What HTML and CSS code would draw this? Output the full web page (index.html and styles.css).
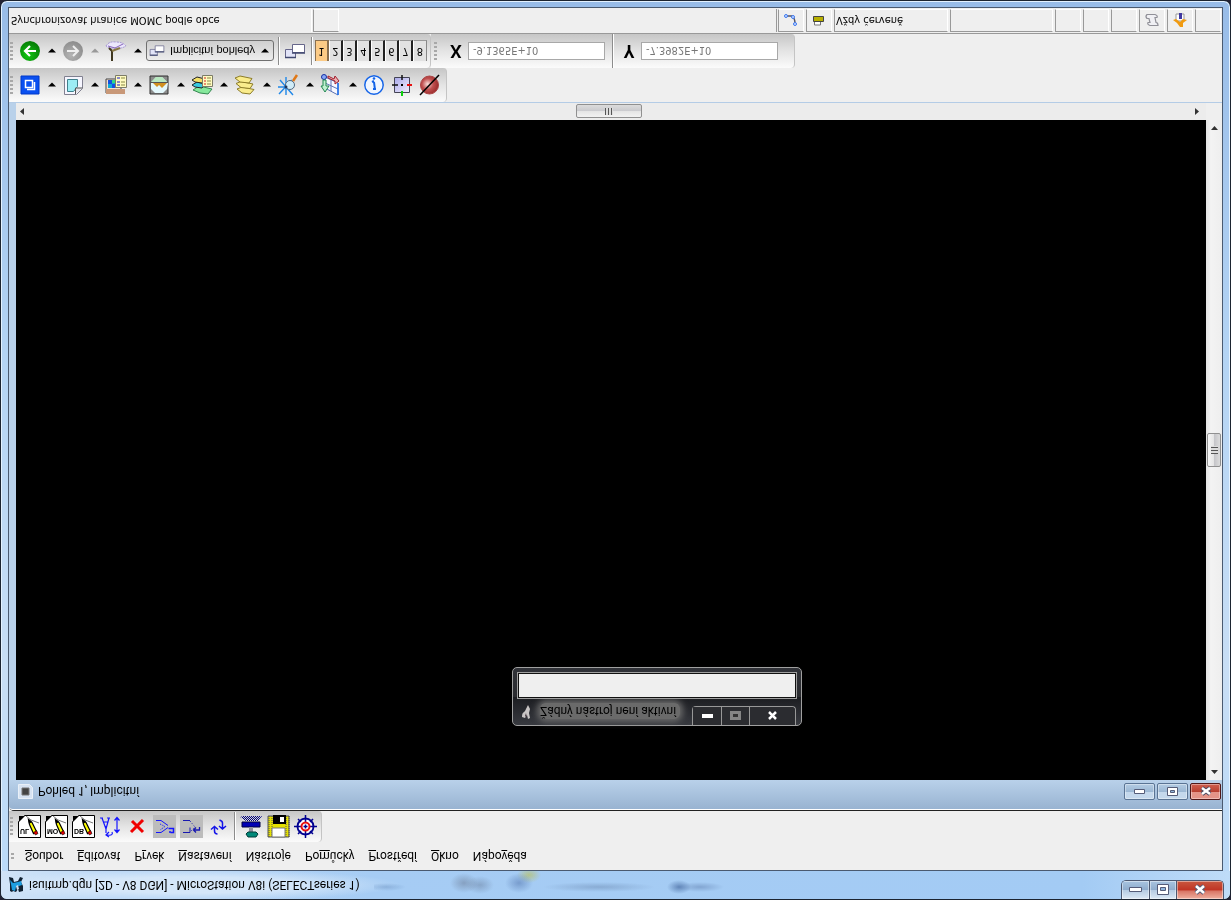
FILE: index.html
```
<!DOCTYPE html>
<html lang="cs">
<head>
<meta charset="utf-8">
<title>isuitmp.dgn [2D - V8 DGN] - MicroStation V8i (SELECTseries 1)</title>
<link rel="stylesheet" href="styles.css">
</head>
<body>
<svg class="defs" aria-hidden="true">
  <defs>
    <radialGradient id="gGreen" cx="40%" cy="70%" r="65%"><stop offset="0" stop-color="#10c810"/><stop offset="1" stop-color="#068006"/></radialGradient>
    <radialGradient id="gGray" cx="40%" cy="70%" r="65%"><stop offset="0" stop-color="#b4b4b4"/><stop offset="1" stop-color="#8f8f8f"/></radialGradient>
    <radialGradient id="gRed" cx="40%" cy="45%" r="62%"><stop offset="0" stop-color="#fbe0dc"/><stop offset=".5" stop-color="#c05050"/><stop offset="1" stop-color="#982828"/></radialGradient>
    <linearGradient id="gLav" x2="1" y2="1"><stop offset="0" stop-color="#a8a8ea"/><stop offset="1" stop-color="#f4f0ff"/></linearGradient>
    <pattern id="pDots" width="2" height="2" patternUnits="userSpaceOnUse"><rect width="1" height="1" fill="#00007c"/><rect x="1" y="1" width="1" height="1" fill="#00007c"/></pattern>
    <symbol id="tri" viewBox="0 0 8 5"><path d="M0 4.500 4 .5 8 4.500z" fill="currentColor"/></symbol>
    <symbol id="pencil" viewBox="0 0 23 23">
      <path d="M.5 22.500V6.500L6.500.5h16v22z" fill="#fff" stroke="#000"/>
      <path d="M1 7V1h6z" fill="#000"/>
      <path d="M8 1l5 4 8 3" fill="none" stroke="#777"/>
      <path d="M10.500 4.500l3.500 3 4.500 9-3 2-4-9z" fill="#ff0" stroke="#000" stroke-width="1.200"/>
      <path d="M10 4l1 5 3-2z" fill="#000"/><path d="M15.500 17.500l3-2 1.500 3-2.500 1.500z" fill="#d00" stroke="#000" stroke-width=".6"/>
    </symbol>
    <symbol id="windows" viewBox="0 0 22 18">
      <path d="M1.500 7.500h10v8h-10z" fill="#e2e4f8" stroke="#66668a"/><path d="M1 15.500h11" stroke="#404870" stroke-width="1.500"/>
      <path d="M8.500 2.500h12v8h-12z" fill="#fff" stroke="#66668a"/><path d="M8 11h13" stroke="#404870" stroke-width="1.500"/>
    </symbol>
  </defs>
</svg>

<main class="app">
  <header class="titlebar">
    <svg class="icon logo" viewBox="0 0 15 15"><path d="M0 0l4 1 1 4 4-1 2-4 3 1-2 4 2 4v5l-4 1-1-3-2 3-3-1-1 1-2-1V7z" fill="#123"/><path d="M1 3l3 3 5-1 3-1 1 4-3 1-3 1-1 4-3-1-1-6z" fill="#1e9ee0"/><path d="M7 9l2-1 1 4-2 1z" fill="#cde"/></svg>
    <h1 class="title">isuitmp.dgn [2D - V8 DGN] - MicroStation V8i (SELECTseries 1)</h1>
    <div class="ghosts"></div>
    <div class="caption">
      <button class="cap cap-min" aria-label="Minimalizovat"><svg class="icon" width="13" height="5"><path d="M.5.5h12v4H.5z" fill="#fff" stroke="#555c78"/></svg></button>
      <button class="cap cap-max" aria-label="Maximalizovat"><svg class="icon" width="12" height="11"><path d="M.5.5h11v10H.5z" fill="#fff" stroke="#555c78"/><path d="M3.500 3.500h5v3h-5z" fill="#8fb4da" stroke="#555c78"/></svg></button>
      <button class="cap cap-close" aria-label="Zavřít"><svg class="icon" width="12" height="11"><path d="M2 2l8 7M10 2L2 9" stroke="#555c78" stroke-width="4.500"/><path d="M2 2l8 7M10 2L2 9" stroke="#fff" stroke-width="2.600"/></svg></button>
    </div>
  </header>

  <div class="client">
    <nav class="menu">
      <span class="grip grip-short"></span>
      <a href="#"><u>S</u>oubor</a><a href="#"><u>E</u>ditovat</a><a href="#">P<u>r</u>vek</a><a href="#"><u>N</u>astavení</a><a href="#">Nástro<u>j</u>e</a><a href="#">Po<u>m</u>ůcky</a><a href="#"><u>P</u>rostředí</a><a href="#"><u>O</u>kno</a><a href="#">Nápo<u>v</u>ěda</a>
    </nav>

    <div class="dock dock-top">
      <div class="bar bar-main">
        <span class="grip"></span>
        <div class="tools">
          <button class="tool lettered" aria-label="UL"><svg class="icon" width="23" height="23"><use href="#pencil"/></svg><span class="tag">UL</span></button>
          <button class="tool lettered" aria-label="MO"><svg class="icon" width="23" height="23"><use href="#pencil"/></svg><span class="tag">MO</span></button>
          <button class="tool lettered" aria-label="DB"><svg class="icon" width="23" height="23"><use href="#pencil"/></svg><span class="tag">DB</span></button>
          <button class="tool" aria-label="Text"><svg class="icon" width="23" height="23" fill="none" stroke="#1414ff" stroke-width="1.200"><path d="M1 3h3M8 3h3M3 3l4 11L10 3M4 7h5M7 14v4M18 3v14M15.500 5.500L18 2.500l2.500 3M15.500 14.500l2.500 3 2.500-3M8 20c5 1 6-1 5-3M10 17l-3 3 3 2"/></svg></button>
          <button class="tool" aria-label="Smazat"><svg class="icon" width="23" height="23"><path d="M6 6l11 11M17 5L5 17" stroke="#f00000" stroke-width="3"/></svg></button>
          <button class="tool off" aria-label="Spojit"><svg class="icon" width="23" height="23" fill="none" stroke="#1414ff"><path d="M3 5.500h5l7 5M3 17.500h5l7-5"/><path d="M7 9l5 2.500L7 15" stroke-dasharray="1 1"/><path d="M15.500 13.500h5v4h-3M16 17h2" stroke-width="1.500"/></svg></button>
          <button class="tool off" aria-label="Rozdělit"><svg class="icon" width="23" height="23" fill="none" stroke="#1818b0"><path d="M3 5.500h7M3 17.500h7v-5"/><path d="M10 6l5 6-5 5" stroke-dasharray="1 2"/><path d="M19.500 12v3h-6M16 12.500l-2.500 2.500 2.500 2.500" stroke-width="1.300"/></svg></button>
          <button class="tool" aria-label="Obnovit"><svg class="icon" width="23" height="23" fill="none" stroke="#1414e8" stroke-width="1.500"><path d="M7.500 11v5q0 3 3 3M4 14.500l3.500-3 3.500 3M15.500 14V8q0-2-3-3M12 11l3.500 3 3.500-3"/></svg></button>
          <span class="sep sep-tall"></span>
          <button class="tool" aria-label="Reference"><svg class="icon" width="23" height="23"><path d="M0 2l3-1h19l-4 5H6z" fill="url(#pDots)"/><path d="M2 7h18v5H2z" fill="#0000b4" stroke="#000040"/><path d="M9 12h4v6H9z" fill="#9090a0"/><path d="M8 17h8l2 2-2 3H8l-2-3z" fill="#008878" stroke="#003c38"/></svg></button>
          <button class="tool" aria-label="Uložit"><svg class="icon" width="23" height="23"><path d="M1 1h21v21H1z" fill="#e4e000" stroke="#555"/><path d="M2 1v21M5 1v21M19 1v21M22 1v21" stroke="#555" stroke-dasharray="1 1"/><path d="M6 0h13v9H6z" fill="#000"/><path d="M13 2h4v5h-4z" fill="#fff"/><path d="M5 13h13v9H5z" fill="#fff" stroke="#777"/></svg></button>
          <button class="tool" aria-label="Cíl"><svg class="icon" width="23" height="23" fill="none"><circle cx="11.500" cy="11.500" r="8" fill="#fff" stroke="#000090" stroke-width="2"/><path d="M11.500 0v23M0 11.500h23M4 4l3 3M19 4l-3 3M4 19l3-3M19 19l-3-3" stroke="#000090" stroke-width="1.500"/><circle cx="11.500" cy="11.500" r="4" fill="#fff" stroke="#e81010" stroke-width="2"/><path d="M11.500 9.500v4M9.500 11.500h4" stroke="#000090" stroke-width="1.500"/></svg></button>
        </div>
      </div>
    </div>

    <section class="view">
      <header class="view-title">
        <svg class="icon view-icon" viewBox="0 0 15 15"><path d="M.5.500h11l3 3v11h-14z" fill="#d7e3f2" stroke="#e9f0f8"/><path d="M4 4h7v7H4z" fill="#444" stroke="#777"/></svg>
        <h2 class="view-name">Pohled 1, Implicitní</h2>
        <div class="view-caption">
          <button class="vcap" aria-label="Minimalizovat pohled"><svg class="icon" width="12" height="5"><path d="M.5.500h10v4H.5z" fill="#fff" stroke="#555c78"/></svg></button>
          <button class="vcap" aria-label="Maximalizovat pohled"><svg class="icon" width="11" height="9"><path d="M.5.500h10v8H.5z" fill="#fff" stroke="#555c78"/><path d="M3.500 3.500h4v2h-4z" fill="#8fb4da" stroke="#555c78"/></svg></button>
          <button class="vcap vcap-close" aria-label="Zavřít pohled"><svg class="icon" width="12" height="10"><path d="M2 2l8 6M10 2L2 8" stroke="#4b4a60" stroke-width="4.500"/><path d="M2 2l8 6M10 2L2 8" stroke="#fff" stroke-width="2.500"/></svg></button>
        </div>
      </header>
      <div class="view-body">
        <div class="canvas">
          <section class="palette">
            <header class="palette-title">
              <svg class="icon palette-icon" viewBox="0 0 12 16"><path d="M8 1l2 4-1 4 1 5-2 1-1-4-2 3-3-1c0-4 1-4 3-6z" fill="#c8c4c4"/><path d="M6 9l1 5-2-2z" fill="#40343c"/></svg>
              <h3 class="palette-name">Žádný nástroj není aktivní</h3>
              <div class="palette-caption">
                <button class="pcap" aria-label="Minimalizovat paletu"><svg class="icon" width="11" height="4"><path d="M0 0h11v4H0z" fill="#fff"/></svg></button>
                <button class="pcap" aria-label="Maximalizovat paletu"><svg class="icon" width="11" height="9"><path d="M1.500 1.500h8v6h-8z" fill="#333" stroke="#858585" stroke-width="3"/></svg></button>
                <button class="pcap pcap-close" aria-label="Zavřít paletu"><svg class="icon" width="11" height="9"><path d="M2 1l7 7M9 1L2 8" stroke="#fff" stroke-width="2.500"/></svg></button>
              </div>
            </header>
            <div class="palette-body"></div>
          </section>
        </div>
        <div class="scroll-v">
          <span class="arrow"><svg class="icon" width="7" height="4"><path d="M0 0h7L3.500 4z" fill="#333"/></svg></span>
          <span class="thumb-v"></span>
          <span class="arrow"><svg class="icon" width="7" height="4"><path d="M0 4h7L3.500 0z" fill="#333"/></svg></span>
        </div>
        <div class="scroll-h">
          <span class="arrow-h"><svg class="icon" width="4" height="7"><path d="M4 0v7L0 3.500z" fill="#333"/></svg></span>
          <span class="thumb-h"></span>
          <span class="arrow-h"><svg class="icon" width="4" height="7"><path d="M0 0v7l4-3.500z" fill="#333"/></svg></span>
        </div>
        <div class="corner"></div>
      </div>
    </section>

    <div class="dock">
      <div class="bar bar-view">
        <span class="grip"></span>
        <button class="split" aria-label="Atributy pohledu"><svg class="icon" width="22" height="22"><path d="M2 2h18v18H2z" fill="#0a50f0" stroke="#0038c8"/><path d="M6.500 6.500h7v7h-7zM8 15.500h7.500V8" fill="none" stroke="#fff" stroke-width="1.500"/></svg><svg class="icon tri"><use href="#tri"/></svg></button>
        <button class="split" aria-label="Modely"><svg class="icon" width="22" height="22"><path d="M2.500 2.500h18v12l-6 6h-12z" fill="#f6f6ff" stroke="#808090"/><path d="M5.500 5.500h10v7l-4 5h-6z" fill="#9cecf4" stroke="#40808c"/><path d="M13.500 20v-6h7" fill="#e4e4e8" stroke="#555"/></svg><svg class="icon tri"><use href="#tri"/></svg></button>
        <button class="split" aria-label="Rastr"><svg class="icon" width="22" height="22"><path d="M1 5h15v14H1z" fill="#f4e0d0" stroke="#444"/><path d="M3 6h8v8H3z" fill="#0ca8d8"/><path d="M3 6h4v4H3zM7 10h4v4H7z" fill="#1450e0"/><path d="M7 6h3v3H7z" fill="#30d888"/><path d="M1 15h19v5H1z" fill="#c89878"/><path d="M10.500 1.500h11v12h-11z" fill="#fffbc0" stroke="#7c7c68"/><path d="M12 4h3M12 8h3M12 11h3" stroke="#1414d0"/><path d="M16 4h4M16 8h4M16 11h4" stroke="#884"/></svg><svg class="icon tri"><use href="#tri"/></svg></button>
        <button class="split" aria-label="Mračna bodů"><svg class="icon" width="22" height="22"><path d="M2 2h18v18H2z" fill="#8c8c8c" stroke="#333"/><path d="M3 9l5-6h6l6 6-1 6-4 4H7l-4-4z" fill="#e4f8fc"/><path d="M3 8l5-5h6l5 5z" fill="#b8e8c0"/><path d="M5 9h14l-5 5-3-3-2 2z" fill="#d09020"/><path d="M2 8.500h18" stroke="#555"/></svg><svg class="icon tri"><use href="#tri"/></svg></button>
        <button class="split" aria-label="Správce vrstev"><svg class="icon" width="22" height="22"><path d="M2 16l6-4 13 3-4 5-8-1z" fill="#86e89c" stroke="#348850"/><path d="M1 11l5-3 8 2-3 4-7-1z" fill="#38c8e0" stroke="#222"/><path d="M1 6l5-3 8 2-3 4-7-1z" fill="#f4e068" stroke="#222"/><path d="M11.500 1.500h10v11h-10z" fill="#fffbc0" stroke="#7c7c68"/><path d="M13 4h2M13 7h2M13 10h2" stroke="#d02020"/><path d="M16 4h4M16 7h4M16 10h4" stroke="#884"/></svg><svg class="icon tri"><use href="#tri"/></svg></button>
        <button class="split" aria-label="Zobrazení vrstev"><svg class="icon" width="22" height="22" fill="#faec8c" stroke="#8c7c28"><path d="M3 15l5-2 12 2.500-4 4.500-8-1z"/><path d="M2 9.500l5-2 12 2.500-3 4.500-9-1z"/><path d="M1 4l5-2 12 2.500-3 4.500-9-1z"/></svg><svg class="icon tri"><use href="#tri"/></svg></button>
        <button class="split" aria-label="Přesné kreslení"><svg class="icon" width="22" height="22" fill="none"><path d="M9 3v18M1 13h16M3 6l13 15M15 6L2 20" stroke="#2088e8" stroke-width="1.400"/><circle cx="13" cy="11" r="4.500" fill="#d0ecf8" stroke="#506880"/><path d="M16 7l4-6" stroke="#e07818" stroke-width="2.500"/><circle cx="9" cy="13" r="1.500" fill="#203860"/></svg><svg class="icon tri"><use href="#tri"/></svg></button>
        <button class="split" aria-label="ACS"><svg class="icon" width="22" height="22"><path d="M5 3l13 6v12L5 14zM11 6v11M5 9l13 6" fill="#f8f8ff" stroke="#5c74b4"/><path d="M18 9v12" stroke="#1c70f0" stroke-width="1.500"/><circle cx="4" cy="3" r="2.500" fill="#88a8f8" stroke="#1830a0"/><path d="M8 2l6 3 1-3 4 5-4 3v-3l-7-3z" fill="#f0b0b0" stroke="#a02030"/><path d="M3 6h3v6h3l-4 6-4-6h2z" fill="#c0f0d0" stroke="#208850"/></svg><svg class="icon tri"><use href="#tri"/></svg></button>
        <div class="singles">
          <button class="single" aria-label="Informace"><svg class="icon" width="22" height="22"><circle cx="11" cy="11" r="9.200" fill="#f0f6ff" stroke="#1464e8" stroke-width="1.500"/><path d="M12 16l-1-8M9 8l2-1M10 15h3" stroke="#1464e8" stroke-width="2"/><circle cx="11" cy="4.500" r="1.300" fill="#1464e8"/></svg></button>
          <button class="single" aria-label="Nitkový kříž"><svg class="icon" width="22" height="22"><path d="M3.500 3.500h15v15h-15z" fill="url(#gLav)" stroke="#445"/><path d="M1 11h6M11 1v5" stroke="#111" stroke-width="1.500"/><path d="M16 11h5" stroke="#e81010" stroke-width="2"/><path d="M11 17v5" stroke="#10d010" stroke-width="2"/><path d="M10 11h2" stroke="#000" stroke-width="2"/></svg></button>
          <button class="single" aria-label="Vypnout vykreslení"><svg class="icon" width="22" height="22"><circle cx="10.500" cy="11" r="9" fill="url(#gRed)" stroke="#a44"/><path d="M1 21L20 1" stroke="#000" stroke-width="1.500"/></svg></button>
        </div>
      </div>
    </div>

    <div class="dock">
      <div class="bar bar-nav">
        <span class="grip"></span>
        <button class="split" aria-label="Zpět"><svg class="icon" width="22" height="22"><circle cx="11" cy="11" r="10" fill="url(#gGreen)"/><path d="M17 11H7M11 6l-5 5 5 5" fill="none" stroke="#fff" stroke-width="2.200"/></svg><svg class="icon tri"><use href="#tri"/></svg></button>
        <button class="split dim" aria-label="Vpřed"><svg class="icon" width="22" height="22"><circle cx="11" cy="11" r="10" fill="url(#gGray)"/><path d="M5 11h10M11 6l5 5-5 5" fill="none" stroke="#eee" stroke-width="2"/></svg><svg class="icon tri"><use href="#tri"/></svg></button>
        <button class="split" aria-label="Kompas"><svg class="icon" width="22" height="22"><path d="M1 6q3-5 10-4 7 0 10 4-5 3-10 2-7 1-10-2z" fill="#ece8fc" stroke="#a090d0" stroke-dasharray="2 1"/><path d="M3 6l7 2 8-4" fill="none" stroke="#86b"/><path d="M4 8l3 3v10" fill="none" stroke="#403820" stroke-width="2"/><path d="M7 11l8-3" stroke="#887848" stroke-width="2"/></svg><svg class="icon tri"><use href="#tri"/></svg></button>
        <div class="combo">
          <svg class="icon" width="16" height="13"><use href="#windows"/></svg>
          <select class="combo-select" aria-label="Skupina pohledů"><option>Implicitní pohledy</option></select>
          <svg class="icon tri"><use href="#tri"/></svg>
        </div>
        <span class="sep"></span>
        <button class="single" aria-label="Pohledy"><svg class="icon" width="22" height="18"><use href="#windows"/></svg></button>
        <span class="sep"></span>
        <div class="toggles">
          <button class="toggle on">1</button><button class="toggle">2</button><button class="toggle">3</button><button class="toggle">4</button><button class="toggle">5</button><button class="toggle">6</button><button class="toggle">7</button><button class="toggle">8</button>
        </div>
      </div>
      <div class="bar bar-coords">
        <span class="grip"></span>
        <label class="axis" for="cx">X</label><input class="coord" id="cx" value="-9.1365E+10">
        <span class="sep sep-full"></span>
        <label class="axis" for="cy">Y</label><input class="coord" id="cy" value="-7.3982E+10">
      </div>
    </div>

    <footer class="status">
      <span class="message">Synchronizovat hranice MOMC podle obce</span>
      <span class="cell"></span>
      <span class="status-gap"></span>
      <span class="cell"><svg class="icon" width="16" height="16"><path d="M2 4h7q3 2 3 8" fill="none" stroke="#556" stroke-width="1.500"/><circle cx="3" cy="4" r="1.500" fill="#cfe0ff" stroke="#3c78f0"/><circle cx="10" cy="5" r="1.500" fill="#cfe0ff" stroke="#3c78f0"/><circle cx="12" cy="12" r="1.500" fill="#cfe0ff" stroke="#3c78f0"/></svg></span>
      <span class="cell"><svg class="icon" width="16" height="16"><path d="M3.500 9v4h6V9" fill="#fff" stroke="#777"/><path d="M2.500 4.500h10v5h-10z" fill="#b8b000" stroke="#444"/></svg></span>
      <span class="cell cell-text">Vždy červeně</span>
      <span class="cell cell-mid"></span>
      <span class="cell"></span><span class="cell"></span><span class="cell"></span>
      <span class="cell"><svg class="icon" width="16" height="16"><path d="M3 2.500h8q3 1 2 3h-2l1 5q2 0 2 3H6q-3-1-2-3h2l-1-4H3q-2-2 0-4z" fill="#f0f0f4" stroke="#909098" stroke-width="1.200"/></svg></span>
      <span class="cell"><svg class="icon" width="16" height="16"><path d="M4 2h8v7H4z" fill="#fff" stroke="#999"/><path d="M7 1h3v6H7z" fill="#4038a0"/><path d="M1 8l3-1 4 3 3-3 4 1-4 3v4H8l-3-4z" fill="#f09a10"/></svg></span>
      <span class="cell"></span>
    </footer>
  </div>
</main>
</body>
</html>
```
FILE: styles.css
```
* { box-sizing: border-box; }
html, body { height: 100%; margin: 0; background: #223; }
h1, h2, h3 { margin: 0; font-weight: normal; }
button { padding: 0; border: 0; background: none; font: inherit; color: inherit; }
.defs { position: absolute; width: 0; height: 0; }

/* The whole desktop is shown upside down. */
.app {
  display: flex;
  flex-direction: column;
  height: 100vh;
  padding: 0 7px 6px 7px;
  border: 1px solid #1c2430;
  border-radius: 7px;
  background: linear-gradient(#b9d9f8 0, #c8def5 25%, #b4d4f4 60%, #98bce8 100%);
  box-shadow: inset 0 0 0 1px #e4f2ff;
  transform: scaleY(-1);
  overflow: hidden;
  font: 11px/14px "DejaVu Sans Condensed", "DejaVu Sans", sans-serif;
  color: #000;
}
/* Icon artwork is upright on screen. */
.icon { display: block; flex: none; transform: scaleY(-1); }

.titlebar {
  display: flex;
  flex: none;
  height: 28px;
  margin: 0 -7px;
  padding: 0 6px 0 8px;
  border-radius: 6px 6px 0 0;
  background:
    radial-gradient(ellipse 210px 16px at 190px 50%, #dcebfad0 50%, #dcebfa00 100%),
    linear-gradient(90deg, #d0e3f7 0, #b8d6f6 10%, #a6ccf4 30%, #a3cbf4 88%, #bfdcf8 100%);
}
.logo { width: 15px; height: 15px; margin-top: 7px; }
.title { margin: 6px 0 0 5px; font: 12px/16px Roboto, sans-serif; white-space: nowrap; }
.ghosts {
  flex: 1;
  margin-left: 14px;
  background:
    radial-gradient(ellipse 20px 4px at 12px 12px, #6d94c480, transparent),
    radial-gradient(ellipse 14px 10px at 90px 16px, #6d7f9a90, transparent),
    radial-gradient(ellipse 14px 9px at 106px 14px, #7088a890, transparent),
    radial-gradient(ellipse 14px 10px at 145px 16px, #5578b090, transparent),
    radial-gradient(ellipse 12px 8px at 155px 24px, #b8c060b0, transparent),
    radial-gradient(ellipse 56px 5px at 225px 12px, #6d8cb480, transparent),
    radial-gradient(ellipse 12px 7px at 305px 12px, #3c6098a0, transparent),
    radial-gradient(ellipse 24px 5px at 326px 12px, #6080b080, transparent);
}
.caption { display: flex; height: 19px; border: 1px solid #4c5870; border-top: 0; border-radius: 0 0 5px 5px; overflow: hidden; }
.cap { display: grid; place-items: center; width: 27px; background: linear-gradient(#dce9f5 0, #b4cae2 50%, #8faccc 50%, #a8c4e0 100%); box-shadow: inset 0 0 0 1px #ffffff70; }
.cap + .cap { border-left: 1px solid #4c5870; }
.cap-close { width: 47px; background: linear-gradient(#f0b0a0 0, #d87464 45%, #c03424 50%, #c85840 100%); }

.client {
  display: flex;
  flex: 1;
  flex-direction: column;
  min-height: 0;
  border: 1px solid #4a5a70;
  background: #efefef;
}
.menu { display: flex; align-items: center; flex: none; gap: 15px; height: 28px; padding-left: 2px; font: 12px/16px Roboto, sans-serif; }
.menu a { color: #000; text-decoration: none; }
.menu a + a { margin-left: -1px; }
.grip { flex: none; width: 3px; height: 18px; background: repeating-linear-gradient(#a8a8a8 0 2px, transparent 2px 4px); }
.grip-short { height: 6px; margin-right: -4px; }

.dock { display: flex; flex: none; }
.bar {
  display: flex;
  align-items: center;
  height: 34px;
  padding-left: 1px;
  border-right: 1px solid #c4c4c4;
  border-radius: 0 4px 4px 0;
  background: linear-gradient(#fbfbfb, #e4e4e4 50%, #c6c6c6);
}
.bar-main { height: 31px; padding-right: 4px; }
.tools { display: flex; align-items: center; gap: 4px; margin-left: 5px; }
.tool { position: relative; width: 23px; height: 23px; }
.off { background: #bcbcbc; }
.tag { position: absolute; left: 2px; top: 1px; font: bold 7px/12px "Liberation Sans", sans-serif; }
.sep { flex: none; width: 1px; height: 28px; background: #8c8c8c; box-shadow: 1px 0 #fff; }
.sep-tall { margin-right: 1px; }
.sep-full { height: 34px; }

.view { display: flex; flex: 1; flex-direction: column; min-height: 0; padding-left: 7px; border-top: 1px solid #222; border-bottom: 1px solid #b4cce6; border-radius: 5px 0 0 0; background: #b9d1ea; }
.view-title { display: flex; flex: none; height: 30px; margin-left: -7px; padding: 0 1px 0 9px; border-top: 1px solid #fff; border-radius: 4px 0 0 0; background: linear-gradient(#98b3d1, #b9d1ea); }
.view-icon { width: 15px; height: 15px; margin-top: 10px; }
.view-name { flex: 1; margin: 10px 0 0 5px; font: 12px/16px Roboto, sans-serif; }
.view-caption { display: flex; gap: 2px; margin-top: 9px; }
.vcap { display: grid; place-items: center; width: 31px; height: 17px; border: 1px solid #5a7494; border-radius: 2px; background: linear-gradient(#c4d8ec 50%, #9cb8d4 50%, #b4cce4); box-shadow: inset 0 0 0 1px #ffffff60; }
.vcap-close { border-color: #501818; background: linear-gradient(#e49488 50%, #b84030 50%, #d06050); }

.view-body { display: grid; flex: 1; grid-template: minmax(0, 1fr) 17px / minmax(0, 1fr) 16px; min-height: 0; }
.canvas { position: relative; background: #000; }
.scroll-v { display: flex; flex-direction: column; align-items: center; justify-content: space-between; padding: 3px 1px 3px 1px; background: linear-gradient(90deg, #e4e4e4, #f3f3f3 30%, #eee); }
.arrow { display: grid; place-items: center; height: 10px; }
.thumb-v { width: 14px; height: 34px; border: 1px solid #909090; border-radius: 2px; background: repeating-linear-gradient(#555 0 1px, #ddd 1px 3px) center / 7px 8px no-repeat, linear-gradient(90deg, #f6f6f6, #e4e4e4 50%, #c4c4c8 50%, #dcdcdc); }
.scroll-h { display: flex; align-items: center; justify-content: space-between; padding: 0 7px 0 3px; background: #ececec; }
.arrow-h { display: grid; place-items: center; width: 5px; }
.thumb-h { width: 66px; height: 14px; border: 1px solid #909090; border-radius: 2px; background: repeating-linear-gradient(90deg, #555 0 1px, #ddd 1px 3px) center / 8px 7px no-repeat, linear-gradient(#f2f2f2, #e4e4e4 50%, #cacace 50%, #dcdcdc); }
.corner { background: #efefef; }

.palette { position: absolute; left: 496px; top: 54px; width: 290px; padding: 0 5px 5px; border: 1px solid #a0a0a0; border-radius: 5px; background: linear-gradient(#383a40, #1b1c20 50%, #2b2c30 50%, #303238); }
.palette-title { display: flex; height: 27px; }
.palette-icon { width: 12px; height: 16px; margin: 5px 0 0 2px; }
.palette-name { flex: 1; margin: 6px 12px 0 8px; border-radius: 6px; background: #6a6a6a; box-shadow: 0 0 6px 3px #6a6a6a; font: 12px/16px Roboto, sans-serif; white-space: nowrap; align-self: flex-start; }
.palette-caption { display: flex; height: 19px; border: 1px solid #989898; border-top: 0; border-radius: 0 0 4px 4px; }
.pcap { display: grid; place-items: center; width: 28px; background: #2b2c30; }
.pcap + .pcap { border-left: 1px solid #989898; }
.pcap-close { width: 46px; border-radius: 0 0 4px 0; }
.palette-body { position: relative; height: 25px; border: 1px solid #111; outline: 1px solid #a0a0a0; background: #efefef; }

.split { display: flex; flex: none; align-items: center; gap: 7px; width: 43px; }
.grip + .split { margin-left: 6px; }
.tri { width: 8px; height: 5px; }
.dim .tri { color: #999; }
.singles { display: flex; gap: 6px; }
.single { width: 22px; }
.bar-view { padding-right: 5px; }
.combo { display: flex; align-items: center; width: 128px; height: 21px; margin: 0 4px 0 -2px; padding: 0 4px 0 2px; border: 1px solid #707070; border-radius: 3px; background: linear-gradient(#ededed, #cfcfcf); }
.combo-select { flex: 1; min-width: 0; margin: 0; padding: 0 0 0 5px; border: 0; appearance: none; background: none; font: 11px/16px "Liberation Sans", sans-serif; color: #000; }
.bar-nav { height: 34px; padding-right: 3px; }
.bar-nav .single { margin: 0 5px; }
.toggles { display: flex; margin-left: 3px; }
.toggle { width: 14px; height: 21px; border-left: 1px solid #fff; border-right: 2px solid #222; border-bottom: 1px solid #999; background: #e2e2e2; font: 11px/18px "DejaVu Sans Condensed", sans-serif; }
.toggle.on { background: #fccb86; border-color: #8a7050; }
.toggle:last-child { border-right: 1px solid #888; }
.bar-coords { padding-left: 3px; padding-right: 16px; }
.axis { width: 31px; text-align: center; font: bold 17px/20px "Open Sans", sans-serif; padding-left: 7px; }
.coord { width: 137px; height: 18px; padding: 0 0 0 4px; border: 1px solid #a8a8a8; background: #fff; font: 11px/16px "DejaVu Sans Condensed", sans-serif; color: #777; }
.bar-coords .sep { margin: 0 -3px 0 7px; }

.status { display: flex; flex: none; gap: 2px; height: 26px; padding: 1px 1px 1px 0; border-top: 1px solid #999; }
.message { width: 303px; padding: 5px 0 0 2px; border-right: 1px solid #fff; margin-right: -1px; white-space: nowrap; }
.cell { flex: none; width: 26px; padding: 3px 0 0 4px; border: 1px solid #999; border-right-color: #fff; border-bottom-color: #fff; white-space: nowrap; }
.cell-text { width: 114px; padding: 4px 0 0 1px; }
.cell-mid { width: 103px; }
.status-gap { flex: 1; border-right: 1px solid #999; margin-right: -1px; }
```
